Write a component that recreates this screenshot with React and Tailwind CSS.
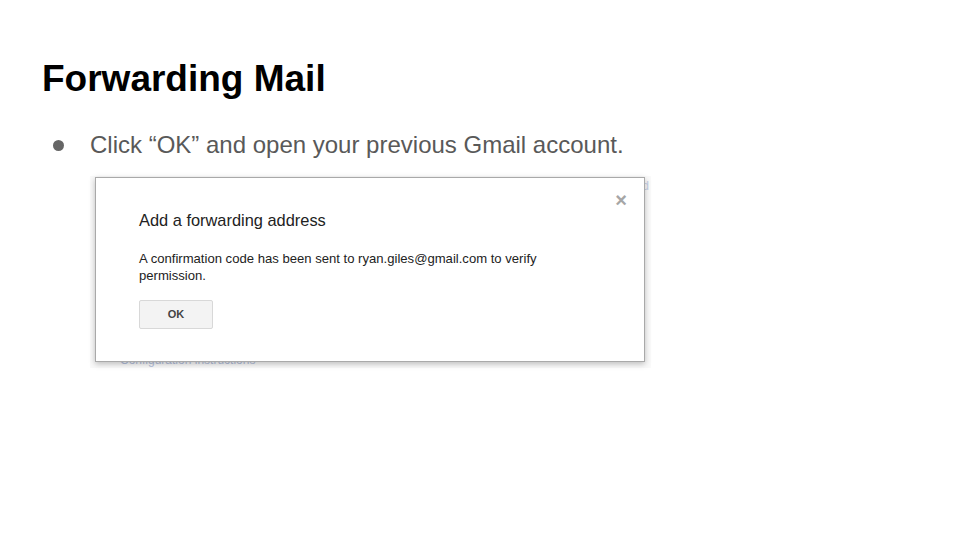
import React from 'react';

const arial = { fontFamily: '"Liberation Sans", Arial, sans-serif' };

const ForwardDialog = () => (
    <div className="relative w-[561px] bg-[#fafafa] ml-[90px] mt-[16px] pl-[5px] pt-[1px] pb-[6px]">
        {/* faint page text behind the dialog */}
        <span className="absolute left-[30px] bottom-[2px] text-[12px] text-[#b4c0dc] leading-none">Configuration instructions</span>
        <span className="absolute right-[2px] top-[4px] text-[12px] text-[#c5cfe6] leading-none">d</span>

        <div className="relative w-[550px] h-[185px] bg-white border border-[#a9a9a9] shadow-[0_2px_6px_rgba(0,0,0,0.25)] pl-[43px] pt-[32px]">
            <span className="absolute right-[17px] top-[12px] text-[20px] font-bold leading-none text-[#a6a6a6]">×</span>
            <h2 className="text-[16.4px] text-[#222] leading-[20px]">Add a forwarding address</h2>
            <p className="mt-[20px] w-[440px] text-[13.1px] leading-[17px] text-[#222]">
                A confirmation code has been sent to ryan.giles@gmail.com to verify permission.
            </p>
            <button className="mt-[16px] w-[74px] h-[29px] bg-[#f3f3f3] border border-[#d8d8d8] rounded-[2px] text-[11px] font-bold text-[#444]">
                OK
            </button>
        </div>
    </div>
);

export default function App() {
    return (
        <div className="w-[960px] h-[540px] bg-white overflow-hidden" style={arial}>
            <h1 className="pl-[42px] pt-[57px] text-[37px] font-bold text-black leading-[44px]">Forwarding Mail</h1>
            <div className="flex items-center pl-[53px] mt-[29px]">
                <span className="w-[11px] h-[11px] rounded-full bg-[#666] mr-[26px]"></span>
                <span className="text-[24px] text-[#595959] leading-[30px]">Click “OK” and open your previous Gmail account.</span>
            </div>
            <ForwardDialog />
        </div>
    );
}
